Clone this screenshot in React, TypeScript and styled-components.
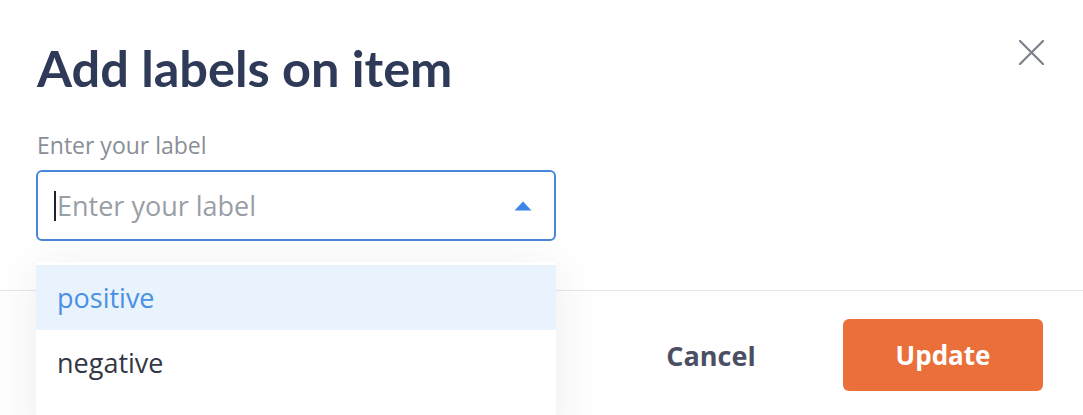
import React from "react";
import styled, { createGlobalStyle } from "styled-components";

const GlobalStyle = createGlobalStyle`
  * { box-sizing: border-box; }
  body {
    margin: 0;
    background: #ffffff;
    font-family: "Open Sans", "Liberation Sans", sans-serif;
  }
`;

const Modal = styled.div`
  position: relative;
  width: 1083px;
  height: 415px;
  overflow: hidden;
  background: #ffffff;
`;

const Body = styled.div`
  padding: 38px 39px 49px 37px;
`;

const Header = styled.div`
  display: flex;
  justify-content: space-between;
  align-items: flex-start;
`;

const Title = styled.h1`
  margin: 0;
  font-family: "Lato", "Open Sans", sans-serif;
  font-weight: 700;
  font-size: 50.5px;
  line-height: 60px;
  color: #2e3a58;
`;

const CloseButton = styled.button`
  width: 25px;
  height: 25px;
  margin-top: 2px;
  padding: 0;
  border: none;
  background: none;
  cursor: pointer;
  display: flex;
`;

const Field = styled.div`
  position: relative;
  width: 520px;
  margin-top: 32px;
  margin-left: -1px;
`;

const Label = styled.label`
  display: block;
  font-size: 23px;
  line-height: 30px;
  color: #8a8e97;
  margin-left: 1px;
  margin-bottom: 10px;
`;

const InputBox = styled.div`
  display: flex;
  align-items: center;
  height: 71px;
  padding: 0 22px 0 16px;
  border: 2px solid #4a86d6;
  border-radius: 6px;
  background: #ffffff;
`;

const Caret = styled.span`
  width: 2px;
  height: 30px;
  margin-right: 1px;
  background: #1f2330;
`;

const Placeholder = styled.span`
  flex: 1;
  font-size: 27px;
  color: #9a9ea6;
`;

const Dropdown = styled.ul`
  position: absolute;
  top: calc(100% + 21px);
  left: 0;
  width: 520px;
  margin: 0;
  padding: 3px 0 40px;
  list-style: none;
  background: #ffffff;
  box-shadow: 0 8px 44px rgba(30, 40, 60, 0.09);
  z-index: 2;
`;

const Option = styled.li<{ $active?: boolean }>`
  height: 65px;
  padding: 0 21px;
  font-size: 27px;
  line-height: 65px;
  color: ${(p) => (p.$active ? "#4a90e2" : "#333844")};
  background: ${(p) => (p.$active ? "#e9f3fd" : "#ffffff")};
`;

const Footer = styled.div`
  display: flex;
  justify-content: flex-end;
  gap: 32px;
  padding: 28px 40px 0;
  border-top: 1px solid #e6e7ea;
`;

const Button = styled.button<{ $primary?: boolean }>`
  width: 200px;
  height: 72px;
  border: none;
  border-radius: 6px;
  font-family: "Open Sans", "Liberation Sans", sans-serif;
  font-weight: 700;
  font-size: ${(p) => (p.$primary ? "26px" : "27px")};
  cursor: pointer;
  color: ${(p) => (p.$primary ? "#ffffff" : "#4a4f63")};
  background: ${(p) => (p.$primary ? "#eb6f3b" : "transparent")};
`;

const labels = [
  { name: "positive", active: true },
  { name: "negative", active: false },
];

export default function App() {
  return (
    <>
      <GlobalStyle />
      <Modal>
        <Body>
          <Header>
            <Title>Add labels on item</Title>
            <CloseButton aria-label="Close">
              <svg width="25" height="25" viewBox="0 0 25 25">
                <path d="M1 1 L24 24 M24 1 L1 24" stroke="#7b8089" strokeWidth="2.2" strokeLinecap="round" />
              </svg>
            </CloseButton>
          </Header>
          <Field>
            <Label>Enter your label</Label>
            <InputBox>
              <Caret />
              <Placeholder>Enter your label</Placeholder>
              <svg width="18" height="10" viewBox="0 0 18 10">
                <path d="M9 0.5 L17.5 9.5 L0.5 9.5 Z" fill="#3d86e8" />
              </svg>
            </InputBox>
            <Dropdown>
              {labels.map((l) => (
                <Option key={l.name} $active={l.active}>
                  {l.name}
                </Option>
              ))}
            </Dropdown>
          </Field>
        </Body>
        <Footer>
          <Button>Cancel</Button>
          <Button $primary>Update</Button>
        </Footer>
      </Modal>
    </>
  );
}
